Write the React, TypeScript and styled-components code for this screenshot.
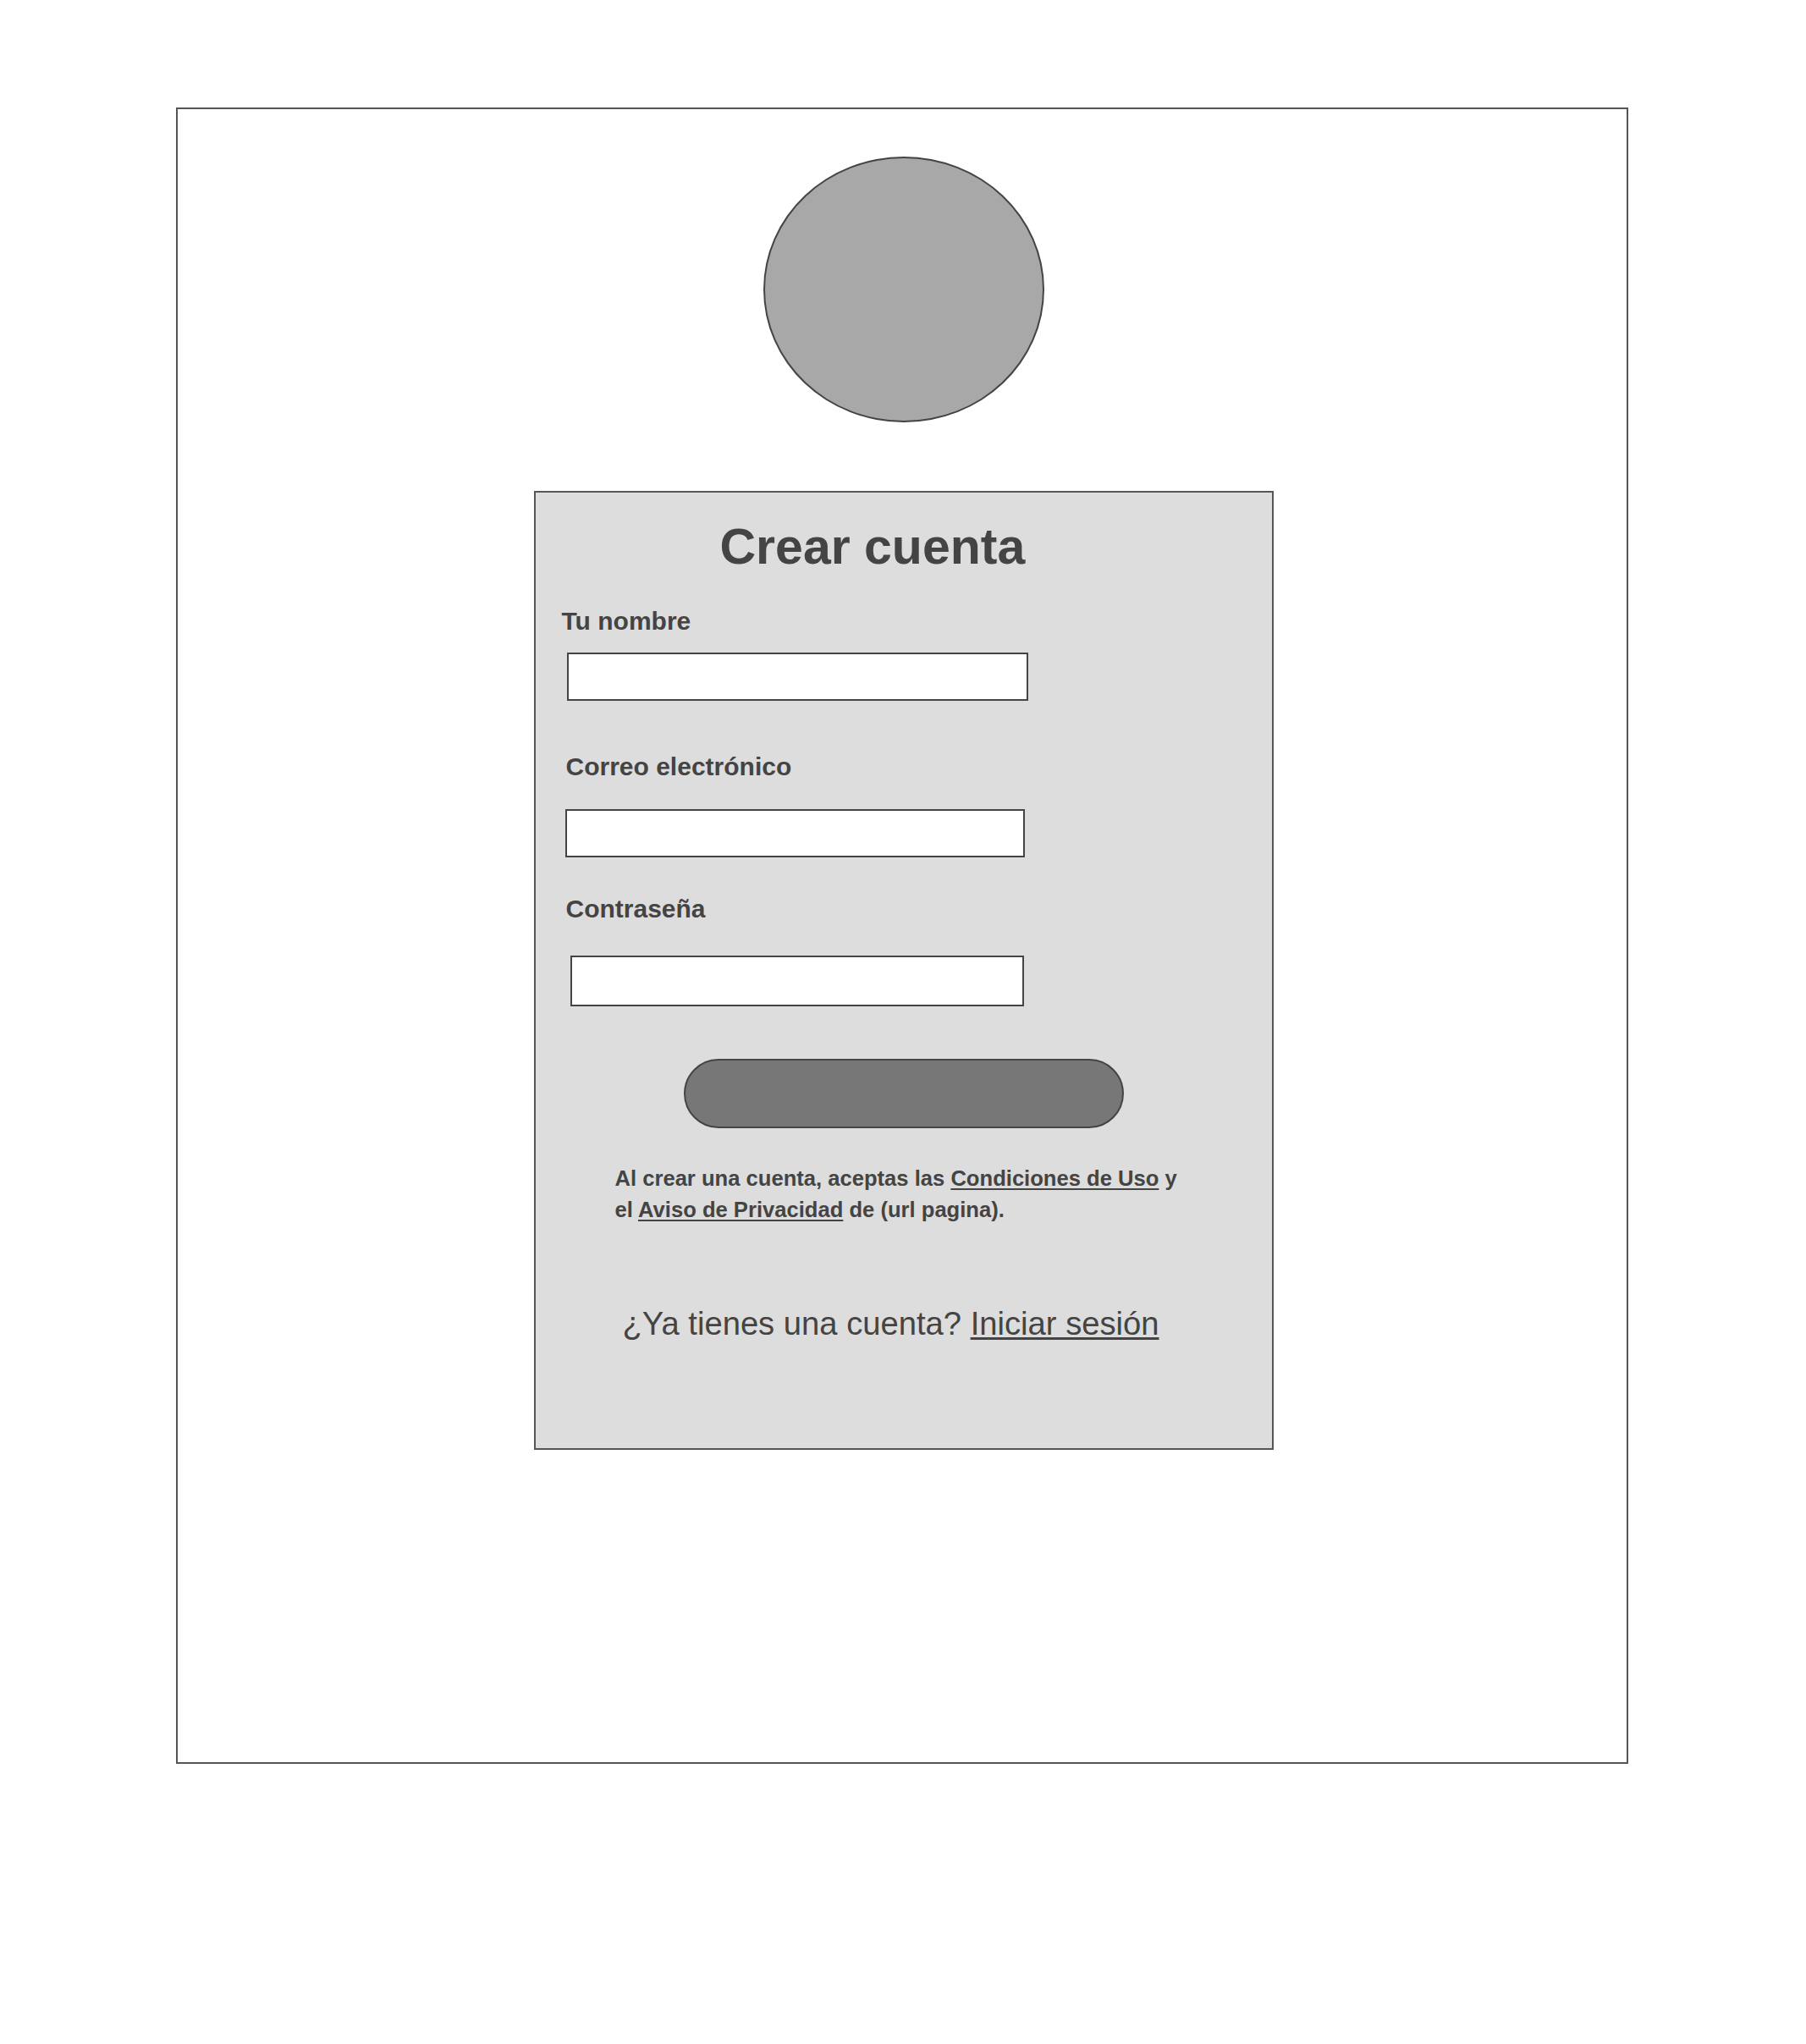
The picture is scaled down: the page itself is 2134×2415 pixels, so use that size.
import styled, { createGlobalStyle } from "styled-components";

const GlobalStyle = createGlobalStyle`
  body {
    margin: 0;
    background: #ffffff;
    font-family: "Liberation Sans", Arial, sans-serif;
    color: #444444;
  }
`;

export default function App() {
  return (
    <>
      <GlobalStyle />
      <Page>
        <Frame>
          <Avatar />
          <Card>
            <Title>Crear cuenta</Title>

            <Label $indent={31} $top={43}>
              Tu nombre
            </Label>
            <Field $indent={37} $top={22} $width={545} $height={57} />

            <Label $indent={36} $top={63}>
              Correo electrónico
            </Label>
            <Field $indent={35} $top={35} $width={543} $height={57} />

            <Label $indent={36} $top={46}>
              Contraseña
            </Label>
            <Field $indent={41} $top={40} $width={536} $height={60} type="password" />

            <SubmitButton type="button" />

            <Terms>
              Al crear una cuenta, aceptas las <Link href="#">Condiciones de Uso</Link> y el{" "}
              <Link href="#">Aviso de Privacidad</Link> de (url pagina).
            </Terms>

            <SignIn>
              ¿Ya tienes una cuenta? <Link href="#">Iniciar sesión</Link>
            </SignIn>
          </Card>
        </Frame>
      </Page>
    </>
  );
}

const Page = styled.div`
  padding: 127px 0 331px 208px;
`;

const Frame = styled.div`
  box-sizing: border-box;
  width: 1716px;
  height: 1957px;
  border: 2px solid #555555;
  padding-left: 3px;
  display: flex;
  flex-direction: column;
  align-items: center;
`;

const Avatar = styled.div`
  box-sizing: border-box;
  margin-top: 56px;
  width: 332px;
  height: 314px;
  border-radius: 50%;
  background: #a8a8a8;
  border: 2px solid #444444;
`;

const Card = styled.div`
  box-sizing: border-box;
  margin-top: 81px;
  width: 874px;
  height: 1133px;
  background: #dddddd;
  border: 2px solid #555555;
  display: flex;
  flex-direction: column;
  align-items: flex-start;
`;

const Title = styled.h1`
  margin: 35px 0 0 218px;
  font-size: 59px;
  line-height: 1;
  font-weight: 700;
  color: #444444;
`;

const Label = styled.label<{ $indent: number; $top: number }>`
  display: block;
  margin: ${(p) => p.$top}px 0 0 ${(p) => p.$indent}px;
  font-size: 30px;
  line-height: 1;
  font-weight: 700;
  color: #444444;
`;

const Field = styled.input<{ $indent: number; $top: number; $width: number; $height: number }>`
  box-sizing: border-box;
  display: block;
  margin: ${(p) => p.$top}px 0 0 ${(p) => p.$indent}px;
  width: ${(p) => p.$width}px;
  height: ${(p) => p.$height}px;
  background: #ffffff;
  border: 2px solid #444444;
  border-radius: 0;
  padding: 0 10px;
  font: 24px "Liberation Sans", Arial, sans-serif;
  outline: none;
`;

const SubmitButton = styled.button`
  box-sizing: border-box;
  align-self: center;
  margin-top: 62px;
  width: 520px;
  height: 82px;
  border-radius: 41px;
  background: #777777;
  border: 2px solid #444444;
  cursor: pointer;
`;

const Terms = styled.p`
  margin: 41px 0 0 94px;
  width: 690px;
  font-size: 25.6px;
  line-height: 37px;
  font-weight: 700;
  color: #444444;
`;

const SignIn = styled.p`
  margin: 97px 0 0 103px;
  font-size: 38.2px;
  line-height: 1;
  color: #444444;
`;

const Link = styled.a`
  color: inherit;
  text-decoration: underline;
  text-underline-offset: 3px;
`;
